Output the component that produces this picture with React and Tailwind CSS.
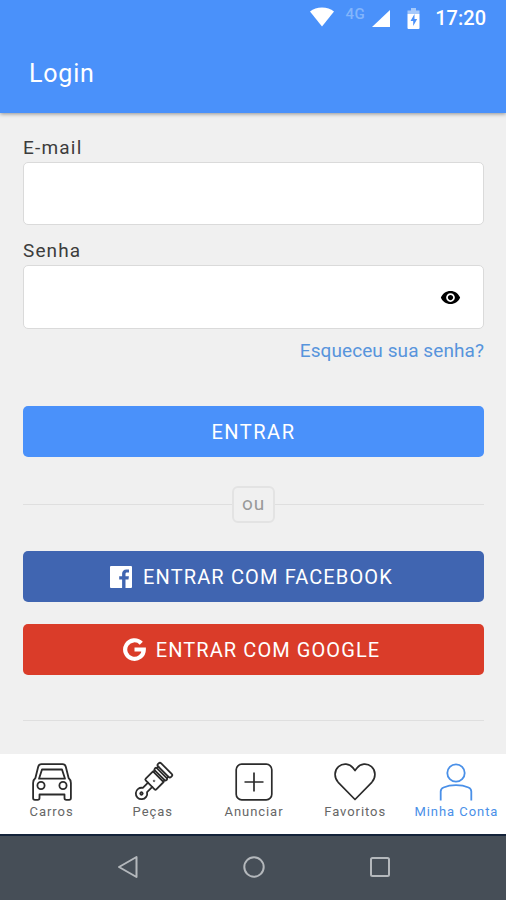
import React, { useState } from 'react';

const WifiIcon = () => (
  <svg width="26" height="20" viewBox="0 0 26 20" fill="currentColor">
    <path d="M13 19.500 1 4.500C4.200 1.900 8.300.5 13 .5s8.800 1.400 12 4z" />
  </svg>
);

const SignalIcon = () => (
  <svg width="18" height="17" viewBox="0 0 18 17" fill="currentColor">
    <path d="M18 0v17H0z" />
  </svg>
);

const BatteryIcon = () => (
  <svg width="13" height="21" viewBox="0 0 13 21">
    <path d="M4 0h5v2.500h3.500V6H.5V2.500H4z" fill="#a5c9fb" />
    <path d="M.5 6h12v14a1 1 0 0 1-1 1h-10a1 1 0 0 1-1-1z" fill="#fff" />
    <path d="M7.500 6 3.500 13h2.700v5l4-7H7.500z" fill="#4a91fa" />
  </svg>
);

const EyeIcon = () => (
  <svg width="21" height="21" viewBox="0 0 24 24" fill="#000">
    <path d="M12 4.500C7 4.500 2.730 7.610 1 12c1.730 4.390 6 7.500 11 7.500s9.270-3.110 11-7.500c-1.730-4.390-6-7.500-11-7.500zM12 17c-2.760 0-5-2.240-5-5s2.240-5 5-5 5 2.240 5 5-2.240 5-5 5zm0-8c-1.660 0-3 1.340-3 3s1.340 3 3 3 3-1.340 3-3-1.340-3-3-3z" />
  </svg>
);

const FacebookIcon = () => (
  <svg width="22" height="22" viewBox="0 0 22 22" fill="#fff">
    <path d="M1 0h20a1 1 0 0 1 1 1v20a1 1 0 0 1-1 1h-5.500v-8.500h3l.4-3.300h-3.400V8.100c0-1 .3-1.600 1.700-1.600H19v-3c-.3 0-1.400-.1-2.600-.1-2.600 0-4.300 1.600-4.300 4.400v2.400H9.200v3.300h2.900V22H1a1 1 0 0 1-1-1V1a1 1 0 0 1 1-1z" />
  </svg>
);

const GoogleIcon = () => (
  <svg width="23" height="23" viewBox="0 0 23 23" fill="none" stroke="#fff" strokeWidth="4.200">
    <path d="M18.300 5.200A9.300 9.300 0 1 0 20.800 11.500H11.500" />
  </svg>
);

const CarIcon = () => (
  <svg width="42" height="38" viewBox="0 0 42 38" fill="none" stroke="currentColor" strokeWidth="1.800" strokeLinejoin="round">
    <path d="M10.500 1.200h21c1.800 0 2.800.8 3.300 2.500l2.800 11.300c1.600 1.300 2.300 2.800 2.300 5V35c0 1.200-.7 1.800-1.800 1.800h-2.800c-1.100 0-1.800-.6-1.800-1.800v-3.500H8.500V35c0 1.200-.7 1.800-1.800 1.800H3.900c-1.100 0-1.800-.6-1.800-1.800V20c0-2.200.7-3.700 2.300-5L7.200 3.700C7.700 2 8.700 1.200 10.500 1.200z" />
    <path d="M11 6.500h20l3 9.200H8z" />
    <circle cx="10" cy="22.500" r="3.600" />
    <circle cx="32" cy="22.500" r="3.600" />
  </svg>
);

const PistonIcon = () => (
  <svg className="overflow-visible" width="38" height="38" viewBox="0 0 38 38" fill="none" stroke="currentColor" strokeWidth="1.800" strokeLinejoin="round" strokeLinecap="round">
    <g transform="rotate(45 19 19)">
      <rect x="9.800" y="0" width="18.400" height="4.400" rx="1.800" />
      <path d="M12 4.400v2M26 4.400v2" />
      <rect x="10.800" y="6.500" width="16.400" height="3" rx="1.200" />
      <path d="M12 9.500v2M26 9.500v2" />
      <path d="M11.500 11.500h15v10.300a1.200 1.200 0 0 1-1.200 1.200H12.700a1.200 1.200 0 0 1-1.200-1.200z" />
      <path d="M16 23v7.400a5.700 5.700 0 1 0 6 0V23" />
      <circle cx="19" cy="35.300" r="1.200" />
      <circle cx="19" cy="17.500" r=".3" />
    </g>
  </svg>
);

const PlusIcon = () => (
  <svg width="38" height="38" viewBox="0 0 38 38" fill="none" stroke="currentColor" strokeWidth="1.700">
    <rect x="1.200" y="1.200" width="35.600" height="35.600" rx="5.500" />
    <path d="M19 9.500v19M9.500 19h19" />
  </svg>
);

const HeartIcon = () => (
  <svg width="42" height="38" viewBox="0 0 42 38" fill="none" stroke="currentColor" strokeWidth="1.700" strokeLinejoin="round">
    <path d="M21 36.500 4.200 19.300C-.2 14.500.2 7.500 4.500 3.700c4.500-3.900 11-3.200 14.500 1.200l2 2.600 2-2.600c3.500-4.400 10-5.100 14.500-1.200 4.300 3.800 4.700 10.800.3 15.600z" />
  </svg>
);

const UserIcon = () => (
  <svg width="34" height="38" viewBox="0 0 34 38" fill="none" stroke="currentColor" strokeWidth="1.800">
    <circle cx="17" cy="10" r="8.700" />
    <path d="M1.700 37.500V28.500c0-2 .9-3.200 2.800-4 7.200-3.200 17.800-3.200 25 0 1.900.8 2.800 2 2.800 4v9" />
  </svg>
);

const tabs = [
  { label: 'Carros', icon: CarIcon },
  { label: 'Peças', icon: PistonIcon },
  { label: 'Anunciar', icon: PlusIcon },
  { label: 'Favoritos', icon: HeartIcon },
  { label: 'Minha Conta', icon: UserIcon },
];

const App = () => {
  const [active, setActive] = useState('Minha Conta');
  const [showPassword, setShowPassword] = useState(false);

  return (
    <div className="h-[900px] w-[506px] flex flex-col overflow-hidden bg-[#f0f0f0] font-['Roboto',sans-serif]">
      {/* Header */}
      <header className="relative h-[113px] shrink-0 bg-[#4a91fa] text-white shadow-[0_1px_4px_rgba(0,0,0,0.4)]">
        <div className="flex h-9 items-center justify-end pr-[20px]">
          <span className="mb-[2px]"><WifiIcon /></span>
          <span className="ml-[11px] mb-2 text-[15px] leading-4 tracking-[0.5px] font-medium text-[#82b5fc]">4G</span>
          <span className="ml-[7px]"><SignalIcon /></span>
          <span className="ml-[17px]"><BatteryIcon /></span>
          <span className="ml-[15px] text-[20px] font-medium">17:20</span>
        </div>
        <h1 className="pl-[29px] pt-[23px] text-[25px] leading-[30px] tracking-[0.8px]">Login</h1>
      </header>

      {/* Form */}
      <main className="flex-1 pl-[23px] pr-[22px] pt-[23px]">
        <label className="block h-[26px] text-[19px] leading-[23px] tracking-[1.200px] text-[#3c3c3c]">E-mail</label>
        <input className="block h-[63px] w-full rounded-[5px] border border-[#dadada] bg-white px-4 outline-none" type="email" />

        <label className="mt-[14px] block h-[26px] text-[19px] leading-[23px] tracking-[1.100px] text-[#3c3c3c]">Senha</label>
        <div className="flex h-[64px] items-center rounded-[5px] border border-[#dadada] bg-white pr-[22px]">
          <input className="min-w-0 flex-1 px-4 outline-none" type={showPassword ? 'text' : 'password'} />
          <button onClick={() => setShowPassword(!showPassword)}><EyeIcon /></button>
        </div>
        <a className="mt-[10px] block text-right text-[19px] leading-[23px] tracking-[0.080px] text-[#5794dc]">Esqueceu sua senha?</a>

        <button className="mt-[44px] block h-[51px] w-full rounded-[5px] bg-[#4a91fa] text-[20px] tracking-[1.500px] text-white">ENTRAR</button>

        <div className="mt-[28px] flex h-[38px] items-center">
          <div className="h-px flex-1 bg-[#dfdfdf]" />
          <span className="flex h-[37px] w-[43px] items-center justify-center rounded-[6px] border-2 border-[#e3e3e3] text-[19px] tracking-[0.8px] text-[#999]">ou</span>
          <div className="h-px flex-1 bg-[#dfdfdf]" />
        </div>

        <button className="mt-[28px] flex h-[51px] w-full items-center justify-center gap-[11px] rounded-[5px] bg-[#4065b1] pr-1 text-[20px] tracking-[1.130px] text-white">
          <FacebookIcon />
          ENTRAR COM FACEBOOK
        </button>
        <button className="mt-[22px] flex h-[51px] w-full items-center justify-center gap-[10px] rounded-[5px] bg-[#da3c29] pr-1 text-[20px] tracking-[1.080px] text-white">
          <GoogleIcon />
          ENTRAR COM GOOGLE
        </button>
        <div className="mt-[45px] h-px bg-[#dfdfdf]" />
      </main>

      {/* Tab bar */}
      <nav className="grid h-[80px] shrink-0 grid-cols-5 bg-white">
        {tabs.map(({ label, icon: Icon }) => (
          <button
            key={label}
            onClick={() => setActive(label)}
            className={`flex flex-col items-center pl-[2px] pt-[9px] ${active === label ? 'text-[#4a90e8]' : 'text-[#2b2b2b]'}`}
          >
            <Icon />
            <span className={`mt-[3px] whitespace-nowrap text-[13px] leading-4 tracking-[0.95px] ${active === label ? '' : 'text-[#666]'}`}>{label}</span>
          </button>
        ))}
      </nav>

      {/* Android navigation */}
      <footer className="flex h-[66px] shrink-0 items-center justify-center gap-[104px] border-t-2 border-[#14233a] bg-[#464e57] pb-[2px] pl-[2px]">
        <svg width="22" height="24" viewBox="0 0 22 24" fill="none" stroke="#b4b8bc" strokeWidth="2" strokeLinejoin="round">
          <path d="M19.500 2v20L2 12z" />
        </svg>
        <svg width="22" height="22" viewBox="0 0 22 22" fill="none" stroke="#b4b8bc" strokeWidth="2">
          <circle cx="11" cy="11" r="9.700" />
        </svg>
        <svg width="22" height="22" viewBox="0 0 22 22" fill="none" stroke="#b4b8bc" strokeWidth="2">
          <rect x="2" y="2" width="18" height="18" rx="1.500" />
        </svg>
      </footer>
    </div>
  );
};

export default App;
